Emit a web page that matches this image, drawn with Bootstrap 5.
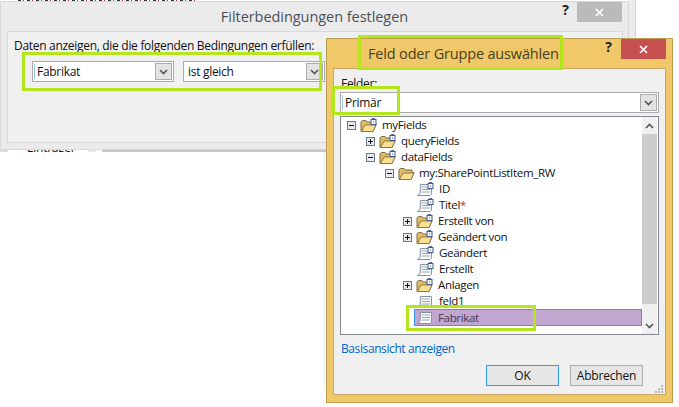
<!DOCTYPE html>
<html lang="de"><head><meta charset="utf-8"><title>Filterbedingungen</title>
<link href="https://cdn.jsdelivr.net/npm/bootstrap@5.3.0/dist/css/bootstrap.min.css" rel="stylesheet">
<style>
html,body{margin:0;height:407px;overflow:hidden;background:#fff}
body{position:relative;width:679px;font:12px/16px "Open Sans","Noto Sans",sans-serif;color:#111;letter-spacing:-.3px}
.win{position:absolute;display:flex;flex-direction:column}
.rem-top{position:absolute;left:18px;top:0;width:178px;height:1px;background:repeating-linear-gradient(90deg,#333 0 3px,#fff 3px 5px,#a03060 5px 6px,#fff 6px 9px)}
.rem-bottom{position:absolute;left:0;top:150px;width:326px;height:2px;display:flex}
.rb-a{width:8px;background:#dcdcdc}
.rb-b{width:80px;background:#fff;overflow:hidden;font-size:12px;line-height:6px;padding-left:19px;color:#111;position:relative}
.rb-b span{display:block;margin-top:-5px}
.rb-c{width:8px;background:#e8e8e8}
.rb-d{width:6px;background:#fff}
.rb-e{flex:1;background:#c8c8c8}
.rem-line{position:absolute;left:324px;top:152px;width:1px;height:235px;background:#f1f1f1}
.win-outer{left:629px;top:0;width:7px;height:40px;border-right:1px solid #d8d8d8;background:#ececec}
.win-back{left:0;top:1px;width:629px;height:149px;background:#ebebeb;border:1px solid #d9d9d9;padding:0 6px 6px}
.win-back .cap{height:29px;color:#4a525a}
.cap-title{font-size:14.5px;line-height:20px;letter-spacing:-.05px}
.capbtn{width:45px;height:20px;color:#fff;display:flex;align-items:center;justify-content:center}
.q{font-weight:700;font-size:14px;color:#222;letter-spacing:0}
.q-front{margin-right:1px}
.gray-x{background:#bababa}.red-x{background:#c75050}
.panel-back{flex:1;background:#f0f0f0;border:1px solid #d9d9d9;padding:6px 6px 0;margin-right:-1px}
.combos{padding:7px 0 0 18px;gap:9px}
.combo{height:21px;background:#fff;border:1px solid #ababab;padding:0 1px 0 1px;align-items:center;display:flex}
.combo-a{width:142px}
.combo-full{width:319px}
.combo .txt{flex:1;border-left:1px solid #9cc4ee;padding-left:2px;line-height:15px}
.combo .txt.nocur{border-left-color:transparent}
.dd{width:17px;height:17px;background:#e3e3e3;border:1px solid #acacac;display:flex;align-items:center;justify-content:center}
.win-front{left:326px;top:38px;width:347px;height:365px;background:#f0c869;border:1px solid #bd9d50;padding:0 6px 7px}
.win-front .cap{height:29px;color:#4a4020}
.title-front{padding-left:35px;font-size:14.5px;line-height:30px;letter-spacing:-.17px}
.panel-front{flex:1;background:#f0f0f0;border:1px solid #c7a964;padding:7px 6px 0;position:relative}
.lbl{line-height:16px;padding-left:1px;height:16px}
.tree{height:219px;margin-top:3px;width:319px;background:#fff;border:1px solid #828790;display:flex;font-size:11.5px;letter-spacing:-.33px}
.rows{flex:1;min-width:0}
.trow{height:16px;display:flex;align-items:center;white-space:nowrap}
.l0{padding-left:6px}.l1{padding-left:25px}.l2{padding-left:44px}.l3{padding-left:63px}.l3f{padding-left:62px}
.l2 .ic{margin-right:4px}
.exp{width:10px;height:9px;margin-right:3px;flex:none;display:block}
.noexp{width:13px;flex:none}
.ic{width:17px;height:15px;flex:none;margin-right:5px;display:block}
.trow.sel{margin-left:73px;padding-left:2px;background:#c2a6d0;border:1px solid #3399ff;color:#4a3a52;height:17px}
.sel .ic{margin-right:4px}
.star{color:#e02020}
.sb{width:15px;margin-right:1px;background:#f0f0f0;display:flex;flex-direction:column;align-items:center}
.sb-end{height:17px;display:flex;align-items:center;justify-content:center}
.sb-thumb{width:15px;height:170px;background:#cdcdcd}
.sb-track{flex:1}
.lnk{color:#0066cc;text-decoration:none;display:block;margin-top:6px;padding-left:1px;letter-spacing:-.4px}
.btns{gap:11px;margin-top:8px;padding-right:16px}
.wbtn{width:73px;height:21px;background:#e6e6e6;border:1px solid #acacac;border-radius:0;font-size:12px;line-height:17px;padding:0;color:#111;letter-spacing:-.2px}
.wbtn.def{border-color:#3399ff}
.grip{position:absolute;right:1px;bottom:0;width:9px;height:9px;display:block}
.mark-g{position:absolute;border:3px solid #b5e61d;pointer-events:none}
.m1{left:22px;top:52px;width:300px;height:39px}
.m2{left:358px;top:35px;width:205px;height:35px}
.m3{left:332px;top:86px;width:68px;height:29px}
.m4{left:406px;top:305px;width:130px;height:26px}
</style></head><body>
<svg width="0" height="0" class="position-absolute">
<defs>
<symbol id="plus" viewBox="0 0 10 9"><rect x=".5" y=".5" width="8" height="8" fill="#e6eaee" stroke="#6d7a85"/><path d="M2 4.5h5M4.5 2v5" stroke="#111"/></symbol>
<symbol id="minus" viewBox="0 0 10 9"><rect x=".5" y=".5" width="8" height="8" fill="#e6eaee" stroke="#6d7a85"/><path d="M2 4.5h5" stroke="#111"/></symbol>
<symbol id="fold" viewBox="0 0 17 15"><path d="M1 4V13.5H13L16 6.5H14V4H7L6 2.5H2.5L1 4Z" fill="#e5bd61" stroke="#7a6a48"/><path d="M1.5 13.5L5 7H16L13 13.5Z" fill="#fbe091" stroke="#8a7648"/></symbol>
<symbol id="foldk" viewBox="0 0 17 15"><use href="#fold"/><rect x="11" y="1.5" width="5" height="5" fill="#fff" stroke="#3a5a92"/><path d="M12.2 1.5V.6h2.6v.9" fill="none" stroke="#3a5a92"/><rect x="13" y="3.5" width="1" height="1" fill="#3a5a92"/></symbol>
<symbol id="doc" viewBox="0 0 17 15"><path d="M3.5 2.5H14.5V12L13 13.5H.5L3 11.5Z" fill="#fff" stroke="#8492a6"/><path d="M4.5 5H13M4.5 7.5H13M4.5 10H13" stroke="#8fa0b8"/></symbol>
<symbol id="dock" viewBox="0 0 17 15"><use href="#doc"/><rect x="11" y="1.5" width="5" height="5" fill="#fff" stroke="#3a5a92"/><path d="M12.2 1.5V.6h2.6v.9" fill="none" stroke="#3a5a92"/><rect x="13" y="3.5" width="1" height="1" fill="#3a5a92"/></symbol>
<symbol id="chev" viewBox="0 0 9 6"><path d="M1 1L4.5 4.5L8 1" fill="none" stroke="#555" stroke-width="1.6"/></symbol>
<symbol id="chevu" viewBox="0 0 9 6"><path d="M1 5L4.5 1.5L8 5" fill="none" stroke="#555" stroke-width="1.6"/></symbol>
<symbol id="cross" viewBox="0 0 9 9"><path d="M1 1L8 8M8 1L1 8" stroke="#fff" stroke-width="1.7"/></symbol>
</defs></svg>

<div class="rem-top"></div>
<div class="rem-bottom"><span class="rb-a"></span><span class="rb-b"><span>Einträger</span></span><span class="rb-c"></span><span class="rb-d"></span><span class="rb-e"></span></div>
<div class="rem-line"></div>
<div class="win win-outer"></div>

<div class="win win-back">
  <div class="cap d-flex align-items-center justify-content-center position-relative">
    <span class="cap-title">Filterbedingungen festlegen</span>
    <span class="position-absolute top-0 end-0 d-flex"><span class="q px-2">?</span><span class="capbtn gray-x"><svg width="9" height="9"><use href="#cross"/></svg></span></span>
  </div>
  <div class="panel-back">
    <div>Daten anzeigen, die die folgenden Bedingungen erfüllen:</div>
    <div class="d-flex combos">
      <div class="combo combo-a"><span class="txt">Fabrikat</span><span class="dd"><svg width="9" height="6"><use href="#chev"/></svg></span></div>
      <div class="combo combo-a"><span class="txt nocur">ist gleich</span><span class="dd"><svg width="9" height="6"><use href="#chev"/></svg></span></div>
    </div>
  </div>
</div>

<div class="win win-front">
  <div class="cap d-flex justify-content-between">
    <span class="title-front">Feld oder Gruppe auswählen</span>
    <span class="d-flex"><span class="q q-front px-2">?</span><span class="capbtn red-x"><svg width="9" height="9"><use href="#cross"/></svg></span></span>
  </div>
  <div class="panel-front">
    <div class="lbl">Felder:</div>
    <div class="combo combo-full"><span class="txt">Primär</span><span class="dd"><svg width="9" height="6"><use href="#chev"/></svg></span></div>
    <div class="tree">
      <div class="rows">
        <div class="trow l0"><svg class="exp"><use href="#minus"/></svg><svg class="ic"><use href="#foldk"/></svg>myFields</div>
        <div class="trow l1"><svg class="exp"><use href="#plus"/></svg><svg class="ic"><use href="#foldk"/></svg>queryFields</div>
        <div class="trow l1"><svg class="exp"><use href="#minus"/></svg><svg class="ic"><use href="#foldk"/></svg>dataFields</div>
        <div class="trow l2"><svg class="exp"><use href="#minus"/></svg><svg class="ic"><use href="#fold"/></svg>my:SharePointListItem_RW</div>
        <div class="trow l3"><span class="noexp"></span><svg class="ic"><use href="#dock"/></svg>ID</div>
        <div class="trow l3"><span class="noexp"></span><svg class="ic"><use href="#dock"/></svg><span>Titel<span class="star">*</span></span></div>
        <div class="trow l3f"><svg class="exp"><use href="#plus"/></svg><svg class="ic"><use href="#foldk"/></svg>Erstellt von</div>
        <div class="trow l3f"><svg class="exp"><use href="#plus"/></svg><svg class="ic"><use href="#foldk"/></svg>Geändert von</div>
        <div class="trow l3"><span class="noexp"></span><svg class="ic"><use href="#dock"/></svg>Geändert</div>
        <div class="trow l3"><span class="noexp"></span><svg class="ic"><use href="#dock"/></svg>Erstellt</div>
        <div class="trow l3f"><svg class="exp"><use href="#plus"/></svg><svg class="ic"><use href="#foldk"/></svg>Anlagen</div>
        <div class="trow l3"><span class="noexp"></span><svg class="ic"><use href="#doc"/></svg>feld1</div>
        <div class="trow sel"><svg class="ic"><use href="#doc"/></svg>Fabrikat</div>
      </div>
      <div class="sb">
        <div class="sb-end"><svg width="9" height="6"><use href="#chevu"/></svg></div>
        <div class="sb-thumb"></div>
        <div class="sb-track"></div>
        <div class="sb-end"><svg width="9" height="6"><use href="#chev"/></svg></div>
      </div>
    </div>
    <a class="lnk" href="#">Basisansicht anzeigen</a>
    <div class="d-flex justify-content-end btns">
      <button class="btn wbtn def" type="button">OK</button>
      <button class="btn wbtn" type="button">Abbrechen</button>
    </div>
    <svg class="grip" viewBox="0 0 9 9"><path d="M6 0h2v2H6zM3 3h2v2H3zM6 3h2v2H6zM0 6h2v2H0zM3 6h2v2H3zM6 6h2v2H6z" fill="#b8b8b8"/></svg>
  </div>
</div>

<div class="mark-g m1"></div>
<div class="mark-g m2"></div>
<div class="mark-g m3"></div>
<div class="mark-g m4"></div>
</body></html>
